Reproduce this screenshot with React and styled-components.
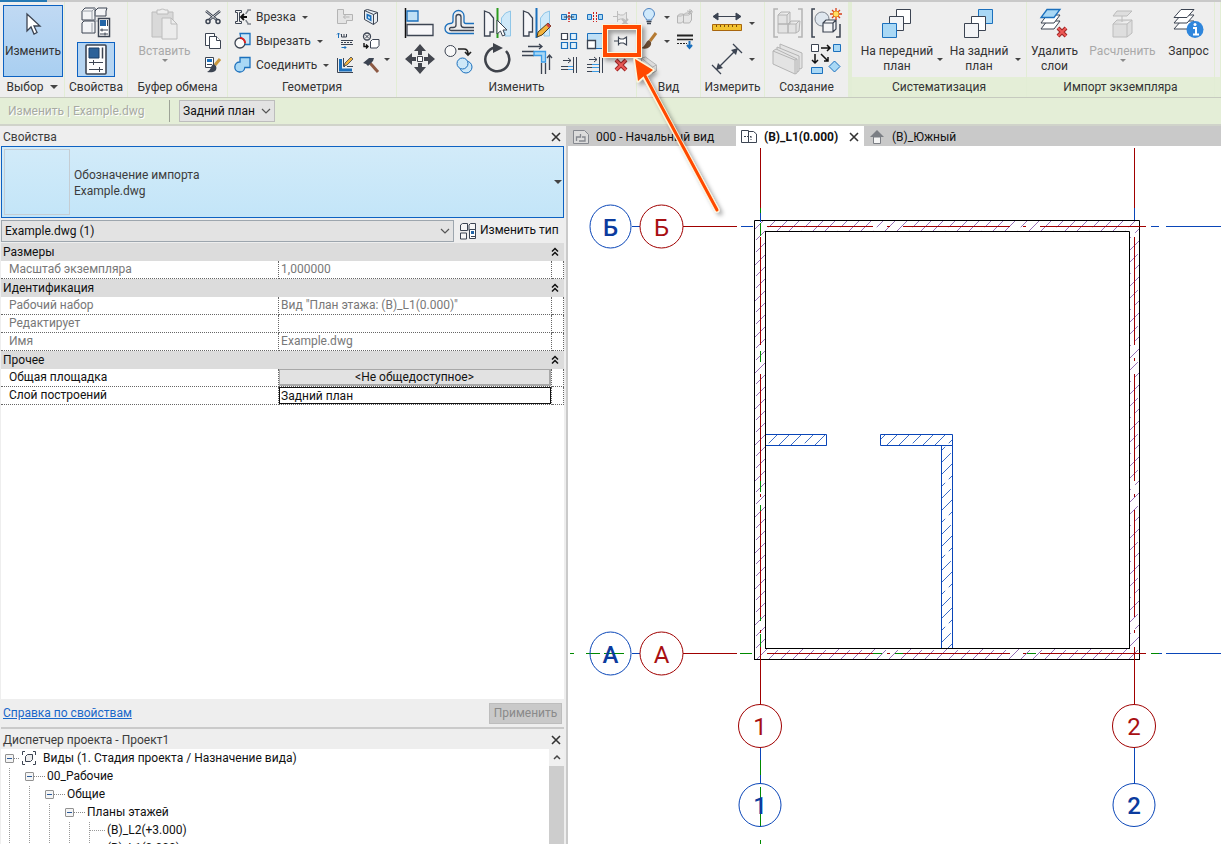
import styled, { createGlobalStyle, css } from 'styled-components';

const GlobalStyle = createGlobalStyle`
  *, *::before, *::after {
    box-sizing: border-box;
  }

  body {
    margin: 0;
    overflow: hidden;
  }

  body, button, select, input {
    font-family: Roboto, 'Open Sans', sans-serif;
    font-size: 12px;
    line-height: 16px;
    color: #111;
  }

  button, select, input {
    margin: 0;
    padding: 0;
    border: none;
    border-radius: 0;
    background: none;
    outline: none;
  }
`;

/* ---------- icons ---------- */

const Svg = styled.svg`
  display: block;
  flex: none;
  overflow: visible;
`;

const dark = '#3c4452';
const blue = '#1b70bd';
const pale = '#a9d8f5';
const off = '#b4b4b4';

const icons = {
  cursor: [30, 32, (
    <path d="M9 6v17l4-4 3 7 3-1.500-3-6.500h6z" fill="#fff" stroke={dark} strokeWidth="1.300" />
  )],
  typeProps: [32, 32, (
    <>
      <path d="M2 4l3-3h10v12H2zM15 4l3-3h9l-1 3v5H15z" fill="#f3f4f6" stroke={dark} />
      <path d="M2 16l2-2h11v12H2z" fill="#f3f4f6" stroke={dark} />
      <path d="M2 4h10v9M12 4l3-3M15 4v10h4M12 16v10" fill="none" stroke="#9aa0a8" />
      <path d="M18.500 11.500h11v18h-11z" fill="#fff" stroke={dark} strokeWidth="1.500" />
      <path d="M20 13h6v6h-6z" fill="#2365a6" />
      <path d="M27.500 13v6" stroke={dark} />
      <path d="M20 23h8M20 27h8M22 21.500v3M25 25.500v3" stroke={dark} />
    </>
  )],
  properties: [22, 32, (
    <>
      <rect x="1" y="1" width="20" height="29" rx="1" fill="#fdfdfd" stroke={dark} strokeWidth="1.600" />
      <path d="M4 4h10v10H4z" fill="#2d6299" stroke="#1d3f66" />
      <path d="M17.500 3.500v11" stroke={dark} strokeWidth="1.500" />
      <path d="M4 18.500h14M4 25.500h14M8.500 16v5M14.500 23v5" stroke={dark} />
    </>
  )],
  paste: [28, 32, (
    <g fill="#d9d9d9" stroke="#bcbcbc">
      <path d="M1 4h21v25H1z" />
      <path d="M6 6V2h3a3 2 0 015 0h3v4z" fill="#eee" />
      <path d="M11 10h9l6 6v15H11z" fill="#ececec" />
      <path d="M20 10v6h6" fill="none" />
    </g>
  )],
  cut: [18, 18, (
    <g stroke={dark} fill="none">
      <path d="M2 3l11 9M16 3L5 12" strokeWidth="2.500" />
      <path d="M2 3l11 9M16 3L5 12" stroke="#f5f5f5" strokeWidth=".8" />
      <circle cx="4" cy="13.500" r="2" strokeWidth="1.500" />
      <circle cx="14" cy="13.500" r="2" strokeWidth="1.500" />
    </g>
  )],
  copy: [18, 18, (
    <g stroke={dark} fill="#fff">
      <path d="M1.500 1.500h9v12h-9z" />
      <path d="M5.500 4.500h7l4 4v8h-11z" />
      <path d="M12.500 4.500v4h4" />
    </g>
  )],
  match: [18, 18, (
    <>
      <path d="M1.500 1.500h8v10h-8z" fill="#fff" stroke={dark} />
      <path d="M3 3h5v3H3z" fill={blue} />
      <path d="M3 8.500h5" stroke={dark} />
      <path d="M16 3l-5 6" stroke="#c9983e" strokeWidth="3" />
      <path d="M10 8c-4 1-2 6-7 8 5 1 11 0 9-6z" fill={dark} />
    </>
  )],
  cope: [18, 18, (
    <>
      <path d="M1.500 2.500h6v2h-2v9h2v2h-6v-2h2v-9h-2z" fill="#f4f4f4" stroke={dark} />
      <path d="M17 2h-3c0 2-2 2-2 4M17 16h-3c0-2-2-2-2-4" fill="none" stroke="#7d828a" strokeWidth="1.500" />
      <path d="M7 9h6M10 6L7 9l3 3" fill="none" stroke="#111" strokeWidth="1.800" />
    </>
  )],
  cutGeometry: [18, 18, (
    <>
      <path d="M6 1.500h10v11H8z" fill="#c9e6f7" stroke={blue} strokeWidth="1.300" />
      <circle cx="6" cy="11" r="5" fill="#fafafa" stroke={dark} strokeWidth="1.300" />
      <path d="M6 6a5 5 0 015 5" fill="none" stroke="#e21d1d" strokeWidth="2" />
    </>
  )],
  join: [18, 18, (
    <path d="M6 1.500h10v10h-5.200a5 5 0 11-4.800-5.500z" fill={pale} stroke={blue} strokeWidth="1.300" />
  )],
  joinOff: [18, 18, (
    <path d="M1.500 1.500h6v5h9v6h-6v3h-9zM7.500 9h6M9.500 7L7.500 9l2 2" fill="#e4e4e4" stroke={off} />
  )],
  beamJoin: [18, 18, (
    <>
      <path d="M2.500 1v5M1 2.500L2.500 1 4 2.500M5.500 15.500H10M8.500 14l1.500 1.500L8.500 17" fill="none" stroke={blue} />
      <path d="M5.500 2v3h5V2M8 2v3" fill="none" stroke={dark} />
      <path d="M5 8.500h12M5 12.500h12" stroke={dark} />
      <path d="M5 10.500h12" stroke={dark} strokeDasharray="2 1" />
    </>
  )],
  wallJoins: [18, 18, (
    <>
      <path d="M1.500 2v14.500H17M7.500 2v8.500H9M11 10.500h6" fill="none" stroke={dark} />
      <path d="M4.500 3v11H16" fill="none" stroke={blue} strokeWidth="3" />
      <path d="M8 10l1-3 6-6 2 2-6 6z" fill="#f3b33e" stroke={dark} strokeWidth=".8" />
    </>
  )],
  face: [18, 18, (
    <>
      <path d="M2.500 2.500v9l9 5v-10zM2.500 2.500l3-1 10 3-4 2M15.500 4.500v9l-4 3" fill="#e7edf3" stroke={dark} />
      <path d="M4.500 5.500l5 2v6l-5-3z" fill={blue} />
      <path d="M6 8l2 1v2l-2-1z" fill="#bfe0f6" />
    </>
  )],
  openings: [18, 18, (
    <g fill="none" stroke={dark}>
      <circle cx="5" cy="4.500" r="3.500" strokeWidth="1.300" />
      <path d="M3 2.500l4 4M7 2.500l-4 4" />
      <path d="M8.500 9.500l2-2h6.500v6l-2 2.500H8.500z" fill="#fff" />
      <path d="M2 11v3.500h4M4 12.500l2 2-2 2" stroke="#111" strokeWidth="1.400" />
    </g>
  )],
  hammer: [18, 18, (
    <>
      <path d="M8 7l8 9" stroke="#8d5a44" strokeWidth="3" />
      <path d="M1 7l6-5h5l-1 3-5 5-2-2z" fill={dark} />
    </>
  )],
  align: [32, 32, (
    <>
      <path d="M1.500 1v30" stroke="#111" strokeWidth="1.500" />
      <path d="M3 4h11v10H3z" fill="#bfe0f6" stroke={blue} strokeWidth="1.300" />
      <path d="M3 17.500h26v11H3z" fill="#f6f6f8" stroke={dark} strokeWidth="1.300" />
    </>
  )],
  offset: [32, 32, (
    <g fill="none">
      <path d="M31 16.500h-8q-2 0-2-2V9a5.500 5.500 0 00-11 0v5q0 2.500-3 2.500a5 5 0 000 10h24" stroke={blue} strokeWidth="1.300" />
      <path d="M31 20.500h-10q-3 0-3-3V10a2.500 2.500 0 00-5 0v8q0 2.500-3 2.500H8a1.500 1.500 0 000 3h23" stroke={dark} strokeWidth="1.300" />
    </g>
  )],
  mirrorPick: [32, 32, (
    <>
      <path d="M2.500 4l5 2 4 5v14H8v4H2.500z" fill="#f6f6f8" stroke={dark} strokeWidth="1.300" />
      <path d="M28.500 4l-5 2-4 5v14H23v4h5.500z" fill="#cfe9f9" stroke="#8fc6e8" />
      <path d="M15.500 1v30" stroke="#2c9c1e" strokeWidth="2" />
      <path d="M15 13v14l3.500-3 2 5 2.500-1-2-5h4z" fill="#fff" stroke={dark} />
    </>
  )],
  mirrorDraw: [32, 32, (
    <>
      <path d="M2.500 4l5 2 4 5v14H8v4H2.500z" fill="#f6f6f8" stroke={dark} strokeWidth="1.300" />
      <path d="M28.500 4l-5 2-4 5v14H23v4h5.500z" fill="#cfe9f9" stroke="#8fc6e8" />
      <path d="M15.500 1v30" stroke={blue} strokeWidth="2" />
      <path d="M16 30l1-5 10-9 3 3-9 9z" fill="#f3b33e" stroke="#4b3a1c" />
      <path d="M25 18l2-2 3 3-2 2z" fill="#c44" />
    </>
  )],
  move: [32, 32, (
    <>
      <path d="M16 1l6 7h-4v4h-4V8h-4zM16 31l6-7h-4v-4h-4v4h-4zM1 16l7-6v4h4v4H8v4zM31 16l-7-6v4h-4v4h4v4z" fill="#44474f" />
      <path d="M13.500 13.500h5v5h-5z" fill="#fff" stroke="#44474f" />
    </>
  )],
  copyItem: [32, 32, (
    <>
      <circle cx="7.500" cy="8" r="5.500" fill="#f8f8f8" stroke={dark} />
      <path d="M15 6h6q4 0 4 5M22 9l3 3 3-3" fill="none" stroke="#222" strokeWidth="1.700" />
      <circle cx="23" cy="24" r="6" fill="#cde8f8" stroke={blue} />
      <circle cx="19.500" cy="20.500" r="5.500" fill="#cde8f8" stroke={blue} />
    </>
  )],
  rotate: [32, 32, (
    <>
      <path d="M24 8A12 12 0 1113 4.500" fill="none" stroke="#3f434b" strokeWidth="2.500" />
      <path d="M11 0l10 5-10 5z" fill="#3f434b" />
    </>
  )],
  trimCorner: [32, 32, (
    <>
      <path d="M7 3.500h14M18 1l3 2.500L18 6M28.500 27V12M26 15l2.500-3 2.500 3" fill="none" stroke={dark} strokeWidth="1.300" />
      <path d="M1 8.500h12M1 12.500h12M20.500 20v11M24.500 20v11" stroke={dark} strokeWidth="1.300" />
      <path d="M13 8.500h11.500V19h-4v-6.500H13z" fill="#a9d8f5" stroke="#3a9be6" strokeWidth="1.300" />
    </>
  )],
  split: [18, 18, (
    <>
      <path d="M1.500 6.500h5v5h-5zM11.500 6.500h5v5h-5z" fill={pale} stroke={blue} />
      <path d="M9 4v10" stroke="#c91d1d" strokeWidth="1.500" strokeDasharray="2 1" />
      <path d="M4 9h10" stroke={dark} />
    </>
  )],
  splitGap: [18, 18, (
    <>
      <path d="M1.500 6.500h4v5h-4zM12.500 6.500h4v5h-4z" fill={pale} stroke={blue} />
      <path d="M7.500 4v10M10.500 4v10" stroke="#c91d1d" strokeDasharray="2 1" />
    </>
  )],
  pinOff: [18, 18, (
    <g fill="#e6e6e6" stroke="#bdbdbd">
      <path d="M1 8.500h4M5.500 3v11M5.500 6l3 1h3l3-3v9l-3-2h-3l-3 1z" />
      <path d="M10 11l6 6M16 11l-6 6" strokeWidth="2" />
    </g>
  )],
  array: [18, 18, (
    <g fill="none" strokeWidth="1.200">
      <path d="M1.500 1.500h6v6h-6z" stroke={dark} fill="#fff" />
      <path d="M10.500 1.500h6v6h-6zM1.500 10.500h6v6h-6zM10.500 10.500h6v6h-6z" stroke={blue} fill="#e3f2fb" />
    </g>
  )],
  scale: [18, 18, (
    <>
      <path d="M1.500 1.500h15v15h-15z" fill="#bfe0f6" stroke={blue} />
      <path d="M1.500 8.500h8v8h-8z" fill="#fff" stroke={dark} strokeWidth="1.300" />
    </>
  )],
  pin: [18, 18, (
    <path d="M2 9h4M6.500 4.500v9M6.500 6l2 1h3l3-2v8l-3-2h-3l-2 1" fill="#fff" stroke={dark} strokeWidth="1.200" />
  )],
  trimSingle: [18, 18, (
    <>
      <path d="M3 4.500h8M8 2l3 2.500L8 7M13.500 1v16M16.500 1v16M1 10.500h8M1 13.500h8" fill="none" stroke={dark} />
      <path d="M8 10.500h5M8 13.500h5" stroke="#3a9be6" />
    </>
  )],
  trimMultiple: [18, 18, (
    <>
      <path d="M3 3.500h8M8 1l3 2.500L8 6M13.500 1v16M16.500 1v16M1 8.500h6M1 11.500h6M1 15.500h6" fill="none" stroke={dark} />
      <path d="M6 8.500h7M6 11.500h7M6 15.500h7" stroke="#3a9be6" />
    </>
  )],
  remove: [18, 18, (
    <>
      <path d="M4 4l10 10M14 4L4 14" stroke="#9e2525" strokeWidth="4" />
      <path d="M4 4l10 10M14 4L4 14" stroke="#ee5a57" strokeWidth="2" />
    </>
  )],
  bulb: [18, 18, (
    <>
      <path d="M6.500 12c0-2-3-3-3-6a5.500 5.500 0 0111 0c0 3-3 4-3 6z" fill="#cfe9fb" stroke="#4d83c0" />
      <path d="M6.500 13.500h5M7 15.500h4" stroke={dark} strokeWidth="1.500" />
    </>
  )],
  brush: [18, 18, (
    <>
      <path d="M16 1l-6 8" stroke="#b57a32" strokeWidth="3" />
      <path d="M9 8c-4 2-3 6-8 8 6 2 11-1 10-6z" fill="#6b4c33" />
    </>
  )],
  displace: [18, 18, (
    <path d="M1.500 8l2-2h4v7l-2 2h-4zM7.500 7l2-2h6v7l-2 3h-6zM1.500 8h4l2-2M7.500 7h5l3-2M14 1v5M11 3l6 1M12 6l4-4" fill="#e5e5e5" stroke={off} />
  )],
  linework: [18, 18, (
    <>
      <path d="M1 3.500h16" stroke="#222" strokeWidth="2" />
      <path d="M1 7.500h16" stroke="#222" strokeWidth="1.500" />
      <path d="M1 11.500h10" stroke="#222" strokeDasharray="2 1" />
      <path d="M13.500 9v7M11 13l2.500 3 2.500-3" fill="none" stroke={blue} strokeWidth="2" />
    </>
  )],
  selectionBox: [18, 18, (
    <path d="M1.500 2l4-1 11 8v6l-4 2-11-8zM1.500 2l11 9v6M12.500 11l4-2" fill="#dedede" stroke={off} />
  )],
  ruler: [32, 24, (
    <>
      <path d="M3 5.500h26M7 2L2 5.500 7 9zM25 2l5 3.500L25 9z" fill={dark} stroke={dark} />
      <path d="M1.500 13.500h29v6h-29z" fill="#f2c230" stroke="#a8660e" />
      <path d="M5.500 14v2M9.500 14v2M13.500 14v2M17.500 14v2M21.500 14v2M25.500 14v2" stroke="#7d4d0c" />
    </>
  )],
  dimension: [32, 32, (
    <>
      <path d="M6 26L26 6M1 22l9 9M22 1l9 9" fill="none" stroke={dark} strokeWidth="1.300" />
      <path d="M5 27l2-7 5 5zM27 5l-7 2 5 5z" fill={dark} />
    </>
  )],
  assemblyOff: [32, 32, (
    <g fill="#e3e3e3" stroke={off}>
      <path d="M6 2H2v28h4M26 2h4v28h-4" fill="none" strokeWidth="1.500" />
      <path d="M6 8l3-3h9v12H6zM6 17h10v9H6zM16 17l3-3h9l-1 10-3 2h-8zM16 17h8l3-3M24 17v9M6 8h9l3-3M15 8v9" />
    </g>
  )],
  createGroup: [32, 32, (
    <>
      <path d="M5 2H2v28h3M26 30h4V17" fill="none" stroke={dark} strokeWidth="1.500" />
      <circle cx="12" cy="12" r="7" fill="#dfe7ef" stroke="#7d848e" />
      <path d="M13 16l3-3h10v9l-3 3H13zM13 16h10v9M23 16l3-3" fill="#f3f4f6" stroke={dark} strokeWidth="1.200" />
      <path d="M26 1v12M20 7h12M22 3l8 8M30 3l-8 8" stroke="#d8401c" strokeWidth="1.300" />
      <circle cx="26" cy="7" r="3" fill="#ffe066" stroke="#e8881c" />
    </>
  )],
  partsOff: [32, 32, (
    <g fill="#e3e3e3" stroke={off}>
      <path d="M8 1l22 9v15l-2 1L8 16z" />
      <path d="M5 4l22 9v15l-2 1L5 20z" />
      <path d="M1 8l3-2 21 10v14l-2 1L1 21zM1 8l22 9v14M23 17l2-1" />
    </g>
  )],
  createSimilar: [32, 32, (
    <>
      <path d="M1.500 1.500h7v7h-7z" fill="#fff" stroke={dark} />
      <path d="M23.500 1.500h7v7h-7zM1.500 24.500h11v6h-11zM24.500 18l5.500 5.500-5.500 5.500-5.500-5.500z" fill={pale} stroke={blue} />
      <path d="M11 5h9M17 2l3 3-3 3M5 11v9M2 17l3 3 3-3M11 11l7 7M18 14v4h-4" fill="none" stroke="#111" strokeWidth="1.500" />
    </>
  )],
  front: [32, 32, (
    <>
      <path d="M15.500 1.500h14v14h-14z" fill="#fff" stroke={dark} />
      <path d="M8.500 8.500h14v14h-14z" fill="#f3f4f6" stroke={dark} />
      <path d="M1.500 15.500h14v14h-14z" fill={pale} stroke={blue} />
    </>
  )],
  back: [32, 32, (
    <>
      <path d="M15.500 1.500h14v14h-14z" fill={pale} stroke={blue} />
      <path d="M8.500 8.500h14v14h-14z" fill="#fff" stroke={dark} />
      <path d="M1.500 15.500h14v14h-14z" fill="#f3f4f6" stroke={dark} />
    </>
  )],
  deleteLayers: [32, 32, (
    <>
      <g fill="#fff" stroke={dark}>
        <path d="M2 21h13l6-8H8z" />
        <path d="M2 15h13l6-8H8z" />
      </g>
      <path d="M2 9.500h13l6-8H8z" fill={pale} stroke={blue} strokeWidth="1.300" />
      <path d="M19 20l8 8M27 20l-8 8" stroke="#9e2525" strokeWidth="4" />
      <path d="M19 20l8 8M27 20l-8 8" stroke="#ee5a57" strokeWidth="2" />
    </>
  )],
  explodeOff: [32, 32, (
    <g fill="#dedede" stroke="#bcbcbc">
      <path d="M6 16l4-4h15v13l-5 4H6zM20 16v13M6 16h14l5-4" />
      <path d="M6 8l4-5h15l-5 5zM15 8v6" />
    </g>
  )],
  query: [32, 32, (
    <>
      <g fill="#fff" stroke={dark}>
        <path d="M1 21h13l7-8H8z" />
        <path d="M1 15h13l7-8H8z" />
        <path d="M1 9.500h13l7-8H8z" />
      </g>
      <circle cx="22" cy="21.500" r="8.500" fill="#2f86dc" />
      <path d="M20 20h3v6M20 26.500h6" fill="none" stroke="#fff" strokeWidth="2" />
      <circle cx="22" cy="16.500" r="1.500" fill="#fff" />
    </>
  )],
  editType: [18, 18, (
    <>
      <path d="M1.500 3l2-1.500h5v7h-7zM10 3l1.500-1.500h5v7H10zM1.500 11h6v6h-6z" fill="#f6f6f6" stroke={dark} />
      <path d="M10.500 7.500h6v9h-6z" fill="#fff" stroke={dark} />
      <path d="M12 9h3v3h-3z" fill="#2365a6" />
      <path d="M12 14.500h4" stroke={dark} />
    </>
  )],
  views: [16, 16, (
    <g fill="none" stroke={dark}>
      <path d="M4 1.500H1.500V5M12 1.500h2.500V5M4 14.500H1.500V11M12 14.500h2.500V11" />
      <path d="M4.500 6.500l2-2h5v5l-2 2h-5z" fill="#eee" />
    </g>
  )],
  sheet: [16, 16, (
    <g fill="none" stroke="#85888f">
      <path d="M.5 1.500h11l4 4v9H.5z" fill="#dcdcdc" />
      <path d="M3.500 12V8h4V5M6 12h6V8h-3" strokeWidth="1.300" />
    </g>
  )],
  plan: [16, 16, (
    <g fill="#fff" stroke={dark}>
      <path d="M.5 1.500h7v12h-7zM7.500 13.500v-11h5l3 2.500v8.500z" />
      <path d="M3 7.500h7M10 7v4" strokeDasharray="2 1" />
    </g>
  )],
  elevation: [16, 16, (
    <>
      <path d="M8 1l7 7H1z" fill="#7b7e84" />
      <path d="M4.500 8h7v6.500h-7z" fill="#f4f4f4" stroke="#7b7e84" />
    </>
  )],
  chevrons: [8, 10, (
    <path d="M1 4.500l3-3 3 3M1 8.500l3-3 3 3" fill="none" stroke="#111" strokeWidth="1.500" />
  )],
  close: [10, 10, (
    <path d="M1 1l8 8M9 1L1 9" stroke="#333" strokeWidth="1.600" />
  )],
  up: [8, 6, (
    <path d="M1 5l3-3 3 3" fill="none" stroke="#444" strokeWidth="1.500" />
  )],
};

const Icon = ({ name }) => {
  const [w, h, art] = icons[name];
  return (
    <Svg width={w} height={h} viewBox={`0 0 ${w} ${h}`} aria-hidden='true'>
      {art}
    </Svg>
  );
};

const Caret = styled.span`
  flex: none;
  width: 0;
  height: 0;
  border: ${(props) => (props.$big ? '4px' : '3px')} solid transparent;
  border-top-color: ${(props) => (props.$muted ? '#8a8a8a' : '#444')};
  border-bottom: none;
`;

/* ---------- ribbon ---------- */

const Page = styled.div`
  display: flex;
  flex-direction: column;
  height: 100vh;
  background: #eee;
`;

const TopEdge = styled.div`
  flex: none;
  height: 2px;
  background: linear-gradient(to right, #2579b5 47px, #c9c9c9 47px);
`;

const Ribbon = styled.div`
  flex: none;
  display: flex;
  height: 95px;
  overflow: hidden;
  background: #eee;
`;

const Panel = styled.section`
  flex: ${(props) => (props.$width ? `0 0 ${props.$width}px` : '1')};
  display: flex;
  flex-direction: column;
  min-width: 0;
  padding-top: 3px;
  border-right: ${(props) => (props.$last ? '4px' : '1px')} solid #e2edd5;
`;

const PanelBody = styled.div`
  display: flex;
  justify-content: ${(props) => (props.$start ? 'flex-start' : 'center')};
  height: 72px;
  padding-left: ${(props) => (props.$start ? '3px' : '0')};
`;

const PanelTitle = styled.div`
  display: flex;
  flex: 1;
  align-items: center;
  justify-content: center;
  gap: 6px;
  color: #333;
  background: ${(props) => (props.$green ? '#e4eed7' : 'transparent')};
`;

const IconGrid = styled.div`
  display: grid;
  grid-template-columns: repeat(${(props) => props.$cols}, ${(props) => props.$cell}px);
  grid-auto-rows: ${(props) => (props.$large ? '36px' : '24px')};
`;

const Tool = styled.button`
  display: flex;
  align-items: center;
  justify-content: ${(props) => (props.$start ? 'flex-start' : 'center')};
  gap: ${(props) => props.$gap || 0}px;
  color: #333;
  white-space: nowrap;
`;

const ToolLabel = styled.span`
  padding-right: 2px;
`;

const BigTool = styled.button`
  display: flex;
  flex-direction: column;
  align-items: center;
  flex: none;
  width: ${(props) => props.$width}px;
  padding-top: 3px;
  line-height: 15px;
  color: ${(props) => (props.disabled ? '#a9a9a9' : '#333')};

  ${(props) =>
    props.$active &&
    css`
      padding-top: 2px;
      border: 1px solid #0d62c2;
      background: linear-gradient(#c0d9f3, #a9cff1);
    `}
`;

const BigLabel = styled.span`
  margin-top: 4px;
`;

const SideCaret = styled.span`
  display: flex;
  align-items: center;
  padding-top: 36px;
`;

const ToggleTool = styled.button`
  display: flex;
  align-items: center;
  justify-content: center;
  width: 38px;
  height: 35px;
  border: 1px solid ${(props) => (props.$active ? '#0d62c2' : 'transparent')};
  background: ${(props) => (props.$active ? '#b6d5f2' : 'none')};
`;

const Stack = styled.div`
  display: flex;
  flex-direction: column;
  gap: 2px;
`;

const TextTools = styled.div`
  display: grid;
  grid-template-rows: repeat(3, 24px);
  width: 98px;
`;

const GridTool = ({ icon, label, caret, start }) => (
  <Tool aria-label={label} $gap={caret ? 6 : 0} $start={start}>
    <Icon name={icon} />
    {caret && <Caret />}
  </Tool>
);

/* ---------- options bar ---------- */

const OptionsBar = styled.div`
  flex: none;
  display: flex;
  align-items: center;
  height: 29px;
  border-top: 1px solid #c6cabf;
  border-bottom: 2px solid #d0d3ca;
  background: #e4eed7;
`;

const Context = styled.span`
  width: 170px;
  padding-left: 8px;
  border-right: 1px solid #9da397;
  line-height: 22px;
  color: #a7aaa3;
  text-shadow: 1px 1px #fff;
`;

const LayerField = styled.label`
  position: relative;
  display: flex;
  margin-left: 9px;

  svg {
    position: absolute;
    right: 4px;
    top: 8px;
    pointer-events: none;
  }
`;

const LayerSelect = styled.select`
  appearance: none;
  width: 96px;
  height: 22px;
  padding-left: 3px;
  border: 1px solid #bdbdbd;
  background: #e3e3e3;
`;

const Chevron = () => (
  <Svg width='10' height='6' viewBox='0 0 10 6' aria-hidden='true'>
    <path d='M1 1l4 4 4-4' fill='none' stroke='#555' strokeWidth='1.200' />
  </Svg>
);

/* ---------- side panels ---------- */

const Workspace = styled.main`
  flex: 1;
  display: grid;
  grid-template-columns: minmax(300px, 568px) 1fr;
  min-height: 0;
`;

const Sidebar = styled.aside`
  display: flex;
  flex-direction: column;
  min-height: 0;
  padding: 0 2px 0 1px;
  border-right: 2px solid #cacaca;
`;

const PanelHeader = styled.header`
  flex: none;
  display: flex;
  align-items: center;
  justify-content: space-between;
  height: 20px;
  padding: 1px 3px 0 2px;
  color: #3c3c3c;
`;

const CloseButton = styled.button`
  display: flex;
`;

const TypeSelector = styled.button`
  flex: none;
  display: flex;
  align-items: center;
  gap: 4px;
  height: 72px;
  padding: 2px 1px 2px 2px;
  border: 1px solid #0d62c2;
  background: linear-gradient(#d2ebf9, #c3e5f8);
  text-align: left;
  color: #3c3c3c;
`;

const Thumb = styled.span`
  width: 66px;
  height: 66px;
  border: 1px solid #c5cdd3;
`;

const TypeName = styled.span`
  flex: 1;
  padding-top: 1px;
`;

const FilterRow = styled.div`
  flex: none;
  display: flex;
  align-items: center;
  height: 25px;
  gap: 5px;
`;

const FilterField = styled(LayerField)`
  flex: 1;
  margin: 0;
`;

const FilterSelect = styled(LayerSelect)`
  width: 100%;
  border-color: #9da6ae;
`;

const EditType = styled.button`
  display: flex;
  gap: 3px;
  width: 105px;
  white-space: nowrap;
`;

const PropsArea = styled.div`
  flex: 1;
  min-height: 0;
  background: #fff;
`;

const PropsTable = styled.table`
  width: 100%;
  border-collapse: separate;
  border-spacing: 0;
  table-layout: fixed;
`;

const GroupCell = styled.th`
  height: 18px;
  padding: 0 5px 0 2px;
  font-weight: 400;
  background: #dcdcdc;

  div {
    display: flex;
    align-items: center;
    justify-content: space-between;
  }
`;

const Cell = styled.td`
  height: 18px;
  padding: 0 0 0 ${(props) => (props.$name ? 8 : 2)}px;
  border-right: 1px dotted #666;
  border-bottom: 1px dotted #666;
  color: ${(props) => (props.$enabled ? '#111' : '#787878')};
  white-space: nowrap;
  vertical-align: top;
`;

const ShareButton = styled.button`
  display: block;
  width: 100%;
  height: 17px;
  border: 1px solid #a8a8a8;
  border-width: 1px 2px 2px 1px;
  background: #e2e2e2;
  line-height: 14px;
`;

const ValueInput = styled.input`
  display: block;
  width: 100%;
  height: 17px;
  padding-left: 1px;
  border: 1px solid #111;
  background: #fff;
  line-height: 14px;
`;

const ControlCell = styled(Cell)`
  padding: 0;
`;

const PropsFooter = styled.div`
  flex: none;
  display: flex;
  align-items: center;
  justify-content: space-between;
  height: 28px;
  padding: 0 2px;
`;

const HelpLink = styled.a`
  color: #1967c9;
`;

const ApplyButton = styled.button`
  width: 73px;
  height: 21px;
  border: 1px solid #bdbdbd;
  background: #c9c9c9;
  color: #8a8a8a;
`;

const Browser = styled.section`
  flex: none;
  display: flex;
  flex-direction: column;
  height: 117px;
  border-top: 2px solid #cacaca;
`;

const TreeArea = styled.div`
  flex: 1;
  display: flex;
  min-height: 0;
  background: #fff;
`;

const Tree = styled.ul`
  flex: 1;
  margin: 0;
  padding: 0;
  overflow: hidden;
  list-style: none;
`;

const TreeRow = styled.li`
  display: flex;
  align-items: center;
  height: 18px;
  padding-left: 4px;
`;

const Guide = styled.span`
  flex: none;
  align-self: stretch;
  width: 20px;
  background: linear-gradient(#fff 50%, #999 50%) 4px 0 / 1px 2px repeat-y;
`;

const Toggle = styled.button`
  flex: none;
  width: 9px;
  height: 9px;
  border: 1px solid #919191;
  border-radius: 1px;
  background: linear-gradient(#2a5a9a, #2a5a9a) center / 5px 1px no-repeat #f4f4f4;
`;

const Dots = styled.span`
  flex: none;
  width: ${(props) => (props.$short ? 5 : 11)}px;
  margin-right: 2px;
  border-top: 1px dotted #888;
`;

const LeafGuide = styled.span`
  flex: none;
  align-self: stretch;
  width: 16px;
  margin: 0 2px 0 4px;
  background:
    linear-gradient(#fff 50%, #999 50%) 0 0 / 1px 2px repeat-y,
    linear-gradient(to right, #fff 50%, #999 50%) 0 9px / 2px 1px repeat-x;
`;

const TreeText = styled.span`
  padding-left: ${(props) => (props.$iconed ? 6 : 0)}px;
  white-space: nowrap;
`;

const Scrollbar = styled.div`
  display: flex;
  flex-direction: column;
  align-items: center;
  width: 15px;
  padding-top: 5px;
  gap: 6px;
  background: #f0f0f0;
`;

const ScrollThumb = styled.span`
  flex: 1;
  width: 100%;
  background: #cdcdcd;
`;

/* ---------- drawing area ---------- */

const Drawing = styled.section`
  display: flex;
  flex-direction: column;
  min-width: 0;
  min-height: 0;
  background: #fff;
`;

const Tabs = styled.nav`
  flex: none;
  display: flex;
  height: 20px;
  overflow: hidden;
  background: #c9c9c9;
`;

const Tab = styled.div`
  flex: none;
  display: flex;
  align-items: center;
  min-width: ${(props) => (props.$active ? 128 : 168)}px;
  padding: 1px 5px 0;
  background: ${(props) => (props.$active ? '#fff' : 'none')};

  ${CloseButton} {
    margin-left: auto;
  }
`;

const TabButton = styled.button`
  display: flex;
  align-items: center;
  gap: 7px;
  font-weight: ${(props) => (props.$active ? 700 : 400)};
  white-space: nowrap;
`;

const Canvas = styled.svg`
  flex: 1;
  display: block;
  width: 100%;
  min-height: 0;
`;

const AxisMark = styled.text`
  font-family: Roboto, sans-serif;
  font-size: 24px;
  font-weight: ${(props) => (props.$bold ? 500 : 400)};
  text-anchor: middle;
  fill: ${(props) => (props.$bold ? '#0b3b9e' : '#a80f12')};
`;

const Callout = styled.svg`
  position: absolute;
  left: 590px;
  top: 15px;
  pointer-events: none;
`;

const red = '#a00000';
const navy = '#0a46b8';
const green = '#008a00';

const Bubble = ({ x, y, r, mark, link }) => (
  <g>
    <ellipse cx={x} cy={y} rx={r} ry='21.500' fill='none' stroke={link ? red : navy} />
    <AxisMark x={x} y={y + 9} $bold={!link}>{mark}</AxisMark>
  </g>
);

const columns = [
  [148, 208], [237, 345], [358, 361], [374, 481], [494, 497], [510, 617], [630, 633], [647, 704],
];

const rows = [
  [683, 737], [767, 873], [887, 890], [903, 1010], [1023, 1026], [1040, 1146],
];

const Hatch = ({ id, color }) => (
  <pattern id={id} width='36' height='36' patternUnits='userSpaceOnUse'>
    <g stroke={color} strokeWidth='.8' fill='none'>
      <path d='M0 12L12 0M12 36L36 12' />
      <path d='M0 24L24 0M24 36L36 24' strokeDasharray='13 5' />
      <path d='M0 36L36 0' strokeDasharray='21 6' />
    </g>
  </pattern>
);

const FloorPlan = () => (
  <Canvas viewBox='568 146 653 698' preserveAspectRatio='xMinYMin slice' role='img' aria-label='План этажа'>
    <defs>
      <Hatch id='hatch' color='#7b4aa5' />
      <Hatch id='hatchBlue' color={navy} />
    </defs>

    <path d='M754.500 220.500h385v439h-385zM765.500 231.500v417h364v-417z' fill='url(#hatch)' stroke='#000' />
    <g fill='url(#hatchBlue)' stroke={navy}>
      <path d='M765.500 434.500h61v11h-61zM880.500 434.500h72v11h-72zM941.500 445.500h11v203h-11z' />
    </g>
    <path d='M754 659.500h386M765 648.500h365M765.500 231v418' stroke='#000' />

    <g stroke={red}>
      {columns.map(([from, to]) => (
        <path key={from} d={`M760.500 ${from}V${to}M1134.500 ${from}V${to}`} />
      ))}
      {rows.map(([from, to]) => (
        <path key={from} d={`M${from} 226.500H${to}M${from} 653.500H${to}`} />
      ))}
    </g>
    <g stroke={green}>
      <path d='M760.500 208v5M760.500 223v13M760.500 351v11M760.500 481v11M760.500 505v6M760.500 617v4M760.500 634v13M760.500 760v15M760.500 787v40M760.500 840v4' />
      <path d='M570 653.500h4M586 653.500h14M604 653.500h20M740 653.500h12M873 653.500h9M895 653.500h8M1027 653.500h9M1151 653.500h8' />
    </g>
    <g stroke={navy}>
      <path d='M760.500 213v9M1134.500 208v12M760.500 748v12M760.500 775v9M1134.500 748v36' />
      <path d='M632 226.500h8M632 653.500h8M741 226.500h12M1151 226.500h8M1166 226.500h55M1159 653.500h3M1166 653.500h55' />
    </g>

    <Bubble x={610.500} y={226.500} r={20.500} mark='Б' />
    <Bubble x={661.500} y={226.500} r={21.500} mark='Б' link />
    <Bubble x={610.500} y={653.500} r={20.500} mark='А' />
    <Bubble x={661.500} y={653.500} r={21.500} mark='А' link />
    <Bubble x={760} y={726} r={21.500} mark='1' link />
    <Bubble x={1134} y={726} r={21.500} mark='2' link />
    <Bubble x={760} y={805} r={21} mark='1' />
    <Bubble x={1134} y={805} r={21} mark='2' />
  </Canvas>
);

const Highlight = () => (
  <Callout width='145' height='210' viewBox='590 15 145 210' aria-hidden='true'>
    <defs>
      <filter id='shade' x='-20%' y='-20%' width='150%' height='150%'>
        <feDropShadow dx='3' dy='3' stdDeviation='2' floodOpacity='.35' />
      </filter>
    </defs>
    <g filter='url(#shade)' fill='none' strokeLinecap='round'>
      <rect x='605' y='27' width='34' height='28' stroke='#fff6d8' strokeWidth='6' />
      <rect x='605' y='27' width='34' height='28' stroke='#ff4800' strokeWidth='4' />
      <path d='M645 77L717 210' stroke='#fff6d8' strokeWidth='5' />
      <path d='M635 59l3 22 6-5 4-2 5-4z' fill='#ff4800' stroke='#fff6d8' strokeWidth='3' strokeLinejoin='round' />
      <path d='M644 74L717 210' stroke='#ff4800' strokeWidth='3' />
      <path d='M635 59l3 22 6-5 4-2 5-4z' fill='#ff4800' />
    </g>
  </Callout>
);

/* ---------- page parts ---------- */

const RibbonBar = () => (
  <Ribbon>
    <Panel $width={65}>
      <PanelBody $start>
        <BigTool $width={60} $active>
          <Icon name='cursor' />
          <BigLabel>Изменить</BigLabel>
        </BigTool>
      </PanelBody>
      <PanelTitle>Выбор <Caret $big /></PanelTitle>
    </Panel>
    <Panel $width={63}>
      <PanelBody>
        <Stack>
          <ToggleTool aria-label='Свойства типа'><Icon name='typeProps' /></ToggleTool>
          <ToggleTool aria-label='Свойства' $active><Icon name='properties' /></ToggleTool>
        </Stack>
      </PanelBody>
      <PanelTitle>Свойства</PanelTitle>
    </Panel>
    <Panel $width={100}>
      <PanelBody>
        <BigTool $width={70} disabled>
          <Icon name='paste' />
          <BigLabel>Вставить</BigLabel>
          <Caret $muted />
        </BigTool>
        <IconGrid $cols={1} $cell={26}>
          <GridTool icon='cut' label='Вырезать в буфер' />
          <GridTool icon='copy' label='Копировать в буфер' />
          <GridTool icon='match' label='Копировать свойства типа' />
        </IconGrid>
      </PanelBody>
      <PanelTitle>Буфер обмена</PanelTitle>
    </Panel>
    <Panel $width={169}>
      <PanelBody>
        <TextTools>
          <Tool $start $gap={4}><Icon name='cope' /><ToolLabel>Врезка</ToolLabel><Caret /></Tool>
          <Tool $start $gap={4}><Icon name='cutGeometry' /><ToolLabel>Вырезать</ToolLabel><Caret /></Tool>
          <Tool $start $gap={4}><Icon name='join' /><ToolLabel>Соединить</ToolLabel><Caret /></Tool>
        </TextTools>
        <IconGrid $cols={2} $cell={26}>
          <GridTool icon='joinOff' label='Соединение крыш' />
          <GridTool icon='face' label='Разделить грань' />
          <GridTool icon='beamJoin' label='Соединения балок' />
          <GridTool icon='openings' label='Проемы' />
          <GridTool icon='wallJoins' label='Соединения стен' />
          <GridTool icon='hammer' label='Демонтаж' />
        </IconGrid>
        <SideCaret style={undefined}><Caret /></SideCaret>
      </PanelBody>
      <PanelTitle>Геометрия</PanelTitle>
    </Panel>
    <Panel $width={240}>
      <PanelBody $start>
        <IconGrid $cols={4} $cell={39} $large>
          <GridTool icon='align' label='Выровнять' />
          <GridTool icon='offset' label='Сместить' />
          <GridTool icon='mirrorPick' label='Зеркало: выбрать ось' />
          <GridTool icon='mirrorDraw' label='Зеркало: нарисовать ось' />
          <GridTool icon='move' label='Переместить' />
          <GridTool icon='copyItem' label='Копировать' />
          <GridTool icon='rotate' label='Повернуть' />
          <GridTool icon='trimCorner' label='Обрезать до угла' />
        </IconGrid>
        <IconGrid $cols={3} $cell={26}>
          <GridTool icon='split' label='Разделить элемент' />
          <GridTool icon='splitGap' label='Разделить с зазором' />
          <GridTool icon='pinOff' label='Открепить' />
          <GridTool icon='array' label='Массив' />
          <GridTool icon='scale' label='Масштаб' />
          <GridTool icon='pin' label='Закрепить' />
          <GridTool icon='trimSingle' label='Обрезать элемент' />
          <GridTool icon='trimMultiple' label='Обрезать элементы' />
          <GridTool icon='remove' label='Удалить' />
        </IconGrid>
      </PanelBody>
      <PanelTitle>Изменить</PanelTitle>
    </Panel>
    <Panel $width={64}>
      <PanelBody $start>
        <IconGrid $cols={2} $cell={36}>
          <GridTool icon='bulb' label='Скрыть на виде' caret start />
          <GridTool icon='displace' label='Сдвинуть элементы' start />
          <GridTool icon='brush' label='Переопределить графику' caret start />
          <GridTool icon='linework' label='Тип линий' start />
          <GridTool icon='selectionBox' label='Рамка выбора' start />
        </IconGrid>
      </PanelBody>
      <PanelTitle>Вид</PanelTitle>
    </Panel>
    <Panel $width={64}>
      <PanelBody>
        <IconGrid $cols={1} $cell={52} $large>
          <GridTool icon='ruler' label='Измерить' caret />
          <GridTool icon='dimension' label='Размер' caret />
        </IconGrid>
      </PanelBody>
      <PanelTitle>Измерить</PanelTitle>
    </Panel>
    <Panel $width={87} $last>
      <PanelBody>
        <IconGrid $cols={2} $cell={38} $large>
          <GridTool icon='assemblyOff' label='Сборка' />
          <GridTool icon='createGroup' label='Группа' />
          <GridTool icon='partsOff' label='Части' />
          <GridTool icon='createSimilar' label='Создать подобный' />
        </IconGrid>
      </PanelBody>
      <PanelTitle>Создание</PanelTitle>
    </Panel>
    <Panel $width={175}>
      <PanelBody>
        <BigTool $width={80}>
          <Icon name='front' />
          <BigLabel>На передний<br />план</BigLabel>
        </BigTool>
        <SideCaret><Caret /></SideCaret>
        <BigTool $width={72}>
          <Icon name='back' />
          <BigLabel>На задний<br />план</BigLabel>
        </BigTool>
        <SideCaret><Caret /></SideCaret>
      </PanelBody>
      <PanelTitle $green>Систематизация</PanelTitle>
    </Panel>
    <Panel $width={188}>
      <PanelBody>
        <BigTool $width={56}>
          <Icon name='deleteLayers' />
          <BigLabel>Удалить<br />слои</BigLabel>
        </BigTool>
        <BigTool $width={80} disabled>
          <Icon name='explodeOff' />
          <BigLabel>Расчленить</BigLabel>
          <Caret $muted />
        </BigTool>
        <BigTool $width={52}>
          <Icon name='query' />
          <BigLabel>Запрос</BigLabel>
        </BigTool>
      </PanelBody>
      <PanelTitle $green>Импорт экземпляра</PanelTitle>
    </Panel>
    <Panel>
      <PanelBody />
      <PanelTitle $green />
    </Panel>
  </Ribbon>
);

const groups = [
  { title: 'Размеры', items: [['Масштаб экземпляра', '1,000000']] },
  {
    title: 'Идентификация',
    items: [
      ['Рабочий набор', 'Вид "План этажа: (В)_L1(0.000)"'],
      ['Редактирует', ''],
      ['Имя', 'Example.dwg'],
    ],
  },
];

const GroupHead = ({ title }) => (
  <tr>
    <GroupCell colSpan='3'>
      <div>{title}<Icon name='chevrons' /></div>
    </GroupCell>
  </tr>
);

const NameCol = styled.col`
  width: 49.4%;
`;

const EndCol = styled.col`
  width: 12px;
`;

const Properties = () => (
  <>
    <PanelHeader>
      Свойства
      <CloseButton aria-label='Закрыть свойства'><Icon name='close' /></CloseButton>
    </PanelHeader>
    <TypeSelector>
      <Thumb />
      <TypeName>Обозначение импорта<br />Example.dwg</TypeName>
      <Caret $big />
    </TypeSelector>
    <FilterRow>
      <FilterField>
        <FilterSelect aria-label='Выбранные элементы'>
          <option>Example.dwg (1)</option>
        </FilterSelect>
        <Chevron />
      </FilterField>
      <EditType><Icon name='editType' />Изменить тип</EditType>
    </FilterRow>
    <PropsArea>
      <PropsTable>
        <colgroup>
          <NameCol />
          <col />
          <EndCol />
        </colgroup>
        <tbody>
          {groups.map((group) => [
            <GroupHead key={group.title} title={group.title} />,
            ...group.items.map(([name, value]) => (
              <tr key={name}>
                <Cell $name>{name}</Cell>
                <Cell>{value}</Cell>
                <Cell />
              </tr>
            )),
          ])}
          <GroupHead title='Прочее' />
          <tr>
            <Cell $name $enabled>Общая площадка</Cell>
            <ControlCell><ShareButton>&lt;Не общедоступное&gt;</ShareButton></ControlCell>
            <Cell />
          </tr>
          <tr>
            <Cell $name $enabled><label htmlFor='layer'>Слой построений</label></Cell>
            <ControlCell><ValueInput id='layer' defaultValue='Задний план' /></ControlCell>
            <Cell />
          </tr>
        </tbody>
      </PropsTable>
    </PropsArea>
    <PropsFooter>
      <HelpLink href='#help'>Справка по свойствам</HelpLink>
      <ApplyButton disabled>Применить</ApplyButton>
    </PropsFooter>
  </>
);

const nodes = [
  { level: 0, text: 'Виды (1. Стадия проекта / Назначение вида)', icon: true },
  { level: 1, text: '00_Рабочие' },
  { level: 2, text: 'Общие' },
  { level: 3, text: 'Планы этажей' },
  { level: 4, text: '(В)_L2(+3.000)', leaf: true },
  { level: 4, text: '(В)_L1(0.000)', leaf: true },
];

const ProjectBrowser = () => (
  <Browser>
    <PanelHeader>
      Диспетчер проекта - Проект1
      <CloseButton aria-label='Закрыть диспетчер'><Icon name='close' /></CloseButton>
    </PanelHeader>
    <TreeArea>
      <Tree>
        {nodes.map(({ level, text, icon, leaf }) => (
          <TreeRow key={text}>
            {Array.from({ length: level }, (_, i) => <Guide key={i} />)}
            {leaf ? <LeafGuide /> : (
              <>
                <Toggle aria-label={text} />
                <Dots $short={icon} />
              </>
            )}
            {icon && <Icon name='views' />}
            <TreeText $iconed={icon}>{text}</TreeText>
          </TreeRow>
        ))}
      </Tree>
      <Scrollbar>
        <Icon name='up' />
        <ScrollThumb />
      </Scrollbar>
    </TreeArea>
  </Browser>
);

const App = () => (
  <Page>
    <GlobalStyle />
    <TopEdge />
    <RibbonBar />
    <OptionsBar>
      <Context>Изменить | Example.dwg</Context>
      <LayerField>
        <LayerSelect aria-label='Слой построений'>
          <option>Задний план</option>
        </LayerSelect>
        <Chevron />
      </LayerField>
    </OptionsBar>
    <Workspace>
      <Sidebar>
        <Properties />
        <ProjectBrowser />
      </Sidebar>
      <Drawing>
        <Tabs>
          <Tab>
            <TabButton><Icon name='sheet' />000 - Начальный вид</TabButton>
          </Tab>
          <Tab $active>
            <TabButton $active><Icon name='plan' />(В)_L1(0.000)</TabButton>
            <CloseButton aria-label='Закрыть вид'><Icon name='close' /></CloseButton>
          </Tab>
          <Tab>
            <TabButton><Icon name='elevation' />(В)_Южный</TabButton>
          </Tab>
        </Tabs>
        <FloorPlan />
      </Drawing>
    </Workspace>
    <Highlight />
  </Page>
);

export default App;
